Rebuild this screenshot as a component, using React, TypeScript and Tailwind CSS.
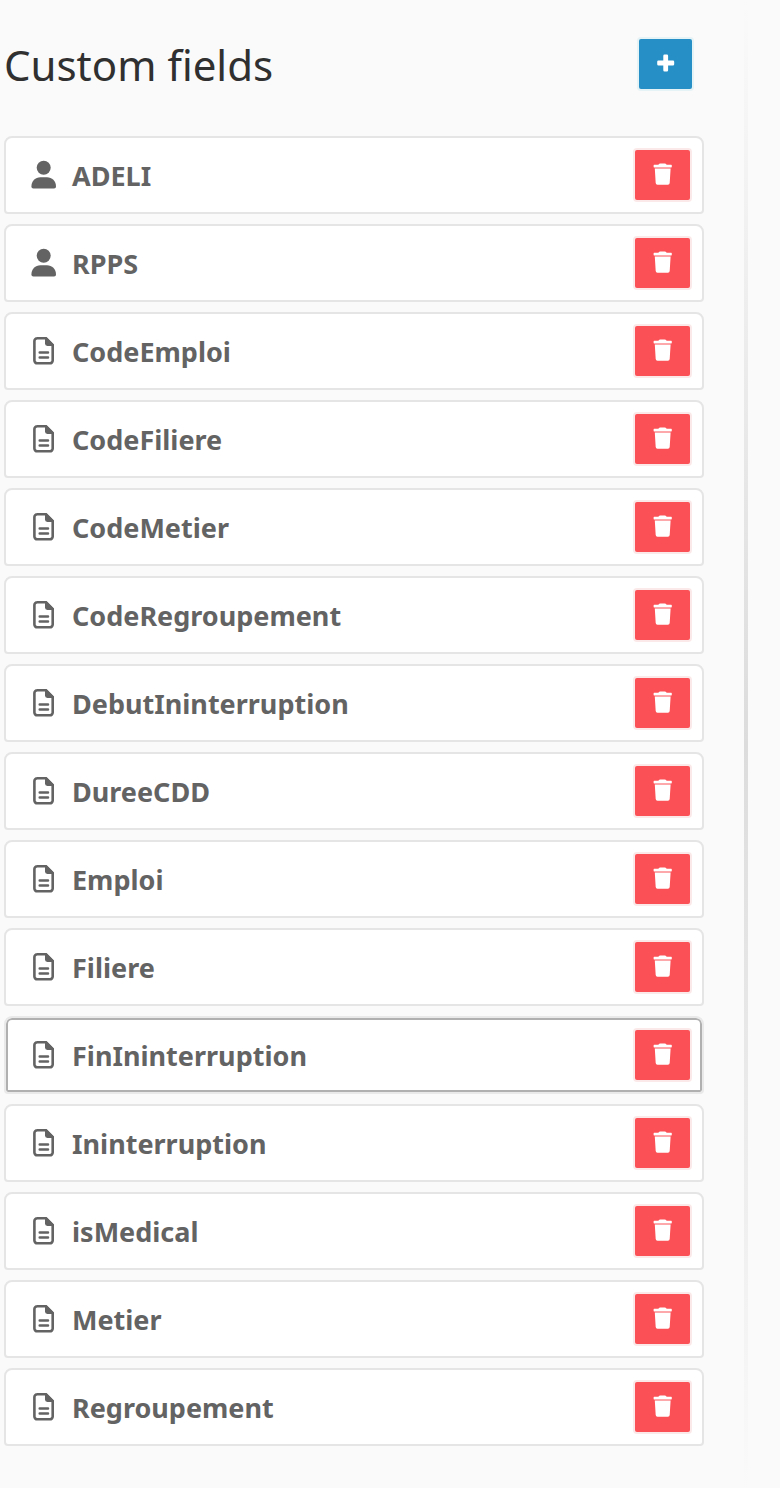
type FieldKind = "user" | "document";

interface CustomField {
  name: string;
  kind: FieldKind;
  selected?: boolean;
}

const fields: CustomField[] = [
  { name: "ADELI", kind: "user" },
  { name: "RPPS", kind: "user" },
  { name: "CodeEmploi", kind: "document" },
  { name: "CodeFiliere", kind: "document" },
  { name: "CodeMetier", kind: "document" },
  { name: "CodeRegroupement", kind: "document" },
  { name: "DebutIninterruption", kind: "document" },
  { name: "DureeCDD", kind: "document" },
  { name: "Emploi", kind: "document" },
  { name: "Filiere", kind: "document" },
  { name: "FinIninterruption", kind: "document", selected: true },
  { name: "Ininterruption", kind: "document" },
  { name: "isMedical", kind: "document" },
  { name: "Metier", kind: "document" },
  { name: "Regroupement", kind: "document" },
];

function UserIcon() {
  return (
    <svg viewBox="0 0 24 28" className="h-7 w-6 shrink-0 overflow-visible" fill="currentColor" aria-hidden="true">
      <circle cx="11.700" cy="6.700" r="7" />
      <path d="M-.6 25.500c0-5.300 4-9.200 9-9.200h6.600c5 0 9 3.900 9 9.200 0 1.200-.8 2-2 2H1.400c-1.200 0-2-.8-2-2z" />
    </svg>
  );
}

function DocumentIcon() {
  return (
    <svg viewBox="0 0 24 28" className="h-7 w-6 shrink-0" fill="none" stroke="currentColor" aria-hidden="true">
      <path d="M4.800 1.300H14L20.700 8V23.500a2.800 2.800 0 0 1-2.800 2.800H5.200a2.800 2.800 0 0 1-2.800-2.800V4.100a2.800 2.800 0 0 1 2.800-2.800z" strokeWidth="2.600" />
      <path d="M13 .5V6.500a2.400 2.400 0 0 0 2.400 2.400h6.400V7.500L14.800.5z" fill="currentColor" stroke="none" />
      <path d="M7.700 15.500h8.300M7.700 20.500h8.300" strokeWidth="2.500" strokeLinecap="round" />
    </svg>
  );
}

function TrashIcon() {
  return (
    <svg viewBox="0 0 20 22" className="h-[22px] w-5" fill="currentColor" aria-hidden="true">
      <path d="M1.200 1.700H5.300L6.300.8Q6.700.4 7.300.4h4.400q.6 0 1 .4l1 .9h4.500q.6 0 .6.700v1.400q0 .6-.6.600H1.200q-.6 0-.6-.6V2.400q0-.7.600-.7z" />
      <path d="M1.800 5.600H17.600L16.700 20q-.1 1.700-1.800 1.700H4.500Q2.800 21.700 2.700 20z" />
    </svg>
  );
}

function PlusIcon() {
  return (
    <svg viewBox="0 0 18 18" className="size-[18px]" fill="currentColor" aria-hidden="true">
      <path d="M7.500.5h2.400q1.200 0 1.200 1.200v4.900h4.900q1.200 0 1.200 1.200v2.400q0 1.200-1.200 1.200h-4.900v4.900q0 1.200-1.200 1.200H7.500q-1.200 0-1.200-1.200v-4.900H1.400Q.2 11.400.2 10.200V7.800q0-1.200 1.200-1.200h4.900V1.700Q6.300.5 7.500.5z" />
    </svg>
  );
}

function FieldRow({ field }: { field: CustomField }) {
  return (
    <li
      className={`flex items-center justify-between rounded-t-lg rounded-b-sm border-2 bg-white p-3 pl-[26px] ${
        field.selected ? "border-[#e9e9e9] inset-ring-2 inset-ring-[#b0b0b0]" : "border-[#e5e5e5]"
      }`}
    >
      <span className="flex items-center gap-4 text-[27px] leading-9 font-bold text-[#636363]">
        {field.kind === "user" ? <UserIcon /> : <DocumentIcon />}
        <span className="pt-0.5">{field.name}</span>
      </span>
      <button
        type="button"
        aria-label={`Delete ${field.name}`}
        className="flex h-[50px] w-[55px] items-center justify-center rounded-xs bg-[#fb5156] pb-0.5 text-white ring-2 ring-[#fbe9e9]"
      >
        <TrashIcon />
      </button>
    </li>
  );
}

export default function App() {
  return (
    <div className="flex min-h-screen bg-[#fafafa] pl-1 font-['Noto_Sans',sans-serif]">
      <main className="flex-1 pt-[39px] pb-[42px]">
        <header className="mb-[47px] flex h-[50px] items-center justify-between pr-3">
          <h1 className="pt-0.5 text-[42px] leading-[50px] font-normal text-[#303030]">Custom fields</h1>
          <button
            type="button"
            aria-label="Add custom field"
            className="flex h-[50px] w-[53px] items-center justify-center rounded-xs bg-[#268fc5] pb-0.5 text-white ring-2 ring-[#e5f2f6]"
          >
            <PlusIcon />
          </button>
        </header>
        <ul className="flex flex-col gap-2.5">
          {fields.map((field) => (
            <FieldRow key={field.name} field={field} />
          ))}
        </ul>
      </main>
      <div className="mr-8 ml-10 w-1 bg-linear-to-b from-[#fafafa] via-[#dcdcdc] to-[#fafafa]" />
    </div>
  );
}
